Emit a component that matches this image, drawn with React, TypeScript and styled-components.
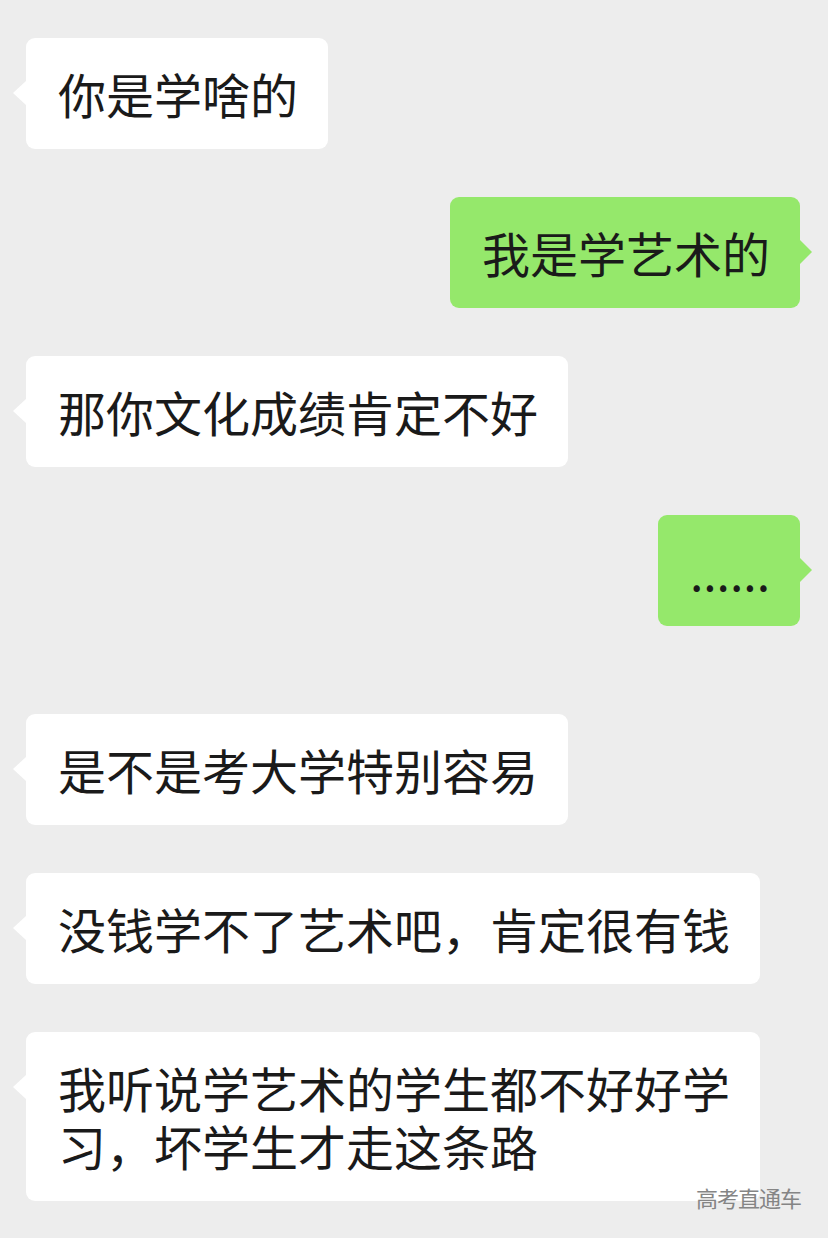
import React from 'react'
import styled, { createGlobalStyle, css } from 'styled-components'

const GlobalStyle = createGlobalStyle`
    html, body {
        margin: 0;
        padding: 0;
        background: #ededed;
    }
    body {
        font-family: "Noto Sans CJK SC", "Noto Sans", sans-serif;
    }
`

const Page = styled.div`
    position: relative;
    width: 828px;
    height: 1238px;
    box-sizing: border-box;
    padding: 38px 28px 0 26px;
    background: #ededed;
    display: flex;
    flex-direction: column;
    gap: 48px;
    overflow: hidden;
`

const Row = styled.div<{ $mine?: boolean; $gapAbove?: number }>`
    display: flex;
    justify-content: ${(p) => (p.$mine ? 'flex-end' : 'flex-start')};
    margin-top: ${(p) => p.$gapAbove ?? 0}px;
`

const Bubble = styled.div<{ $mine?: boolean }>`
    position: relative;
    max-width: 672px;
    box-sizing: content-box;
    padding: 26px 30px 27px 32px;
    border-radius: 9px;
    font-size: 48px;
    line-height: 58px;
    color: #1a1a1a;
    background: ${(p) => (p.$mine ? '#95e86b' : '#ffffff')};
    word-break: break-all;

    &::before {
        content: '';
        position: absolute;
        top: 43px;
        width: 0;
        height: 0;
        border-top: 12px solid transparent;
        border-bottom: 12px solid transparent;
        ${(p) =>
            p.$mine
                ? css`
                      right: -12px;
                      border-left: 12px solid #95e86b;
                  `
                : css`
                      left: -13px;
                      border-right: 13px solid #ffffff;
                  `}
    }
`

const Watermark = styled.div`
    position: absolute;
    right: 27px;
    top: 1183px;
    font-size: 22px;
    line-height: 28px;
    color: #858585;
    letter-spacing: -1px;
`

const messages: { text: string; mine?: boolean; gapAbove?: number }[] = [
    { text: '你是学啥的' },
    { text: '我是学艺术的', mine: true },
    { text: '那你文化成绩肯定不好' },
    { text: '......', mine: true },
    { text: '是不是考大学特别容易', gapAbove: 40 },
    { text: '没钱学不了艺术吧，肯定很有钱' },
    { text: '我听说学艺术的学生都不好好学习，坏学生才走这条路' },
]

const App = () => {
    return (
        <>
            <GlobalStyle />
            <Page>
                {messages.map((m, i) => (
                    <Row key={i} $mine={m.mine} $gapAbove={m.gapAbove}>
                        <Bubble $mine={m.mine}>{m.text}</Bubble>
                    </Row>
                ))}
                <Watermark>高考直通车</Watermark>
            </Page>
        </>
    )
}

export default App
